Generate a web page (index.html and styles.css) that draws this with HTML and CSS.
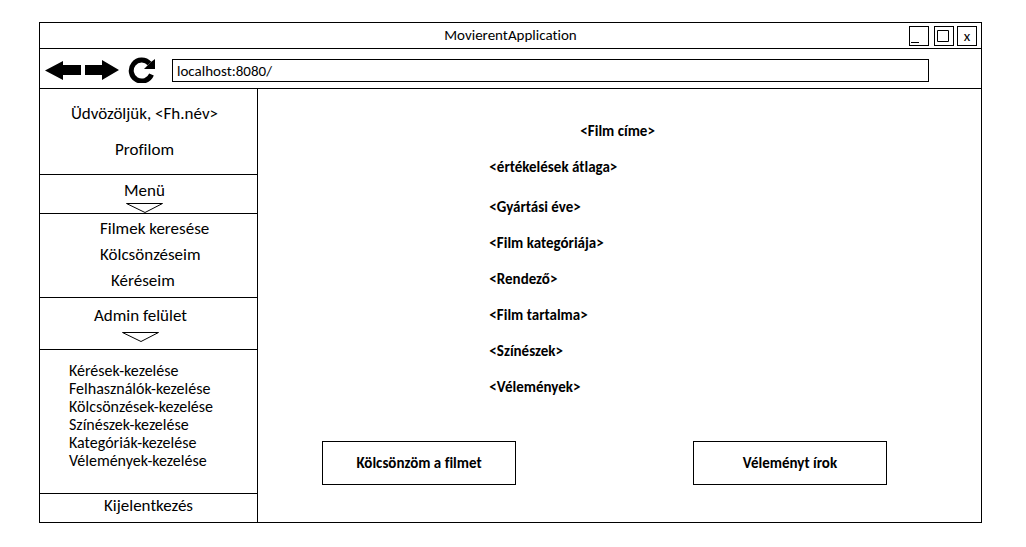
FILE: index.html
```html
<!DOCTYPE html>
<html lang="hu">
<head>
<meta charset="utf-8">
<meta name="viewport" content="width=device-width, initial-scale=1">
<title>MovierentApplication</title>
<link rel="stylesheet" href="styles.css">
</head>
<body>
<div class="window">
  <header class="titlebar">
    <h1 class="titlebar-text">MovierentApplication</h1>
    <div class="window-controls">
      <button class="control" type="button" aria-label="Kis méret"><svg width="18" height="18" viewBox="0 0 18 18"><path d="M1 15.500h8" stroke="#000" fill="none"/></svg></button>
      <button class="control control-max" type="button" aria-label="Teljes méret"><svg width="18" height="18" viewBox="0 0 18 18"><path d="M2.500 3.500h11v11h-11z" stroke="#000" fill="none"/></svg></button>
      <button class="control" type="button" aria-label="Bezárás">x</button>
    </div>
  </header>
  <div class="toolbar">
    <button class="icon-button" type="button" aria-label="Vissza"><svg width="36" height="20" viewBox="0 0 36 20"><path d="M0 10.500 18 1v4h18v10H18v5z"/></svg></button>
    <button class="icon-button" type="button" aria-label="Előre"><svg width="34" height="20" viewBox="0 0 34 20"><path d="M34 10 17 0v5H0v10h17v5z"/></svg></button>
    <button class="icon-button reload" type="button" aria-label="Frissítés"><svg width="28" height="26" viewBox="0 0 28 26"><path d="M24.500 17.500A10.500 10.500 0 1 1 22.500 6.500" fill="none" stroke="#000" stroke-width="5"/><path d="M28 2v10H17l4-4 3-3z"/></svg></button>
    <input class="address" type="text" aria-label="Cím" value="localhost:8080/">
  </div>
  <div class="content">
    <nav class="sidebar">
      <div class="panel greeting">
        <p class="line">Üdvözöljük, &lt;Fh.név&gt;</p>
        <a class="line" href="#">Profilom</a>
      </div>
      <button class="panel toggle" type="button">Menü<svg width="37" height="10" viewBox="0 0 37 10"><path d="M.5.5h36L19 9.500z" fill="none" stroke="#000"/></svg></button>
      <ul class="panel menu">
        <li><a href="#">Filmek keresése</a></li>
        <li><a href="#">Kölcsönzéseim</a></li>
        <li class="indented"><a href="#">Kéréseim</a></li>
      </ul>
      <button class="panel toggle toggle-admin" type="button">Admin felület<svg width="37" height="10" viewBox="0 0 37 10"><path d="M.5.5h36L19 9.500z" fill="none" stroke="#000"/></svg></button>
      <ul class="panel admin">
        <li><a href="#">Kérések-kezelése</a></li>
        <li><a href="#">Felhasználók-kezelése</a></li>
        <li><a href="#">Kölcsönzések-kezelése</a></li>
        <li><a href="#">Színészek-kezelése</a></li>
        <li><a href="#">Kategóriák-kezelése</a></li>
        <li><a href="#">Vélemények-kezelése</a></li>
      </ul>
      <a class="logout" href="#">Kijelentkezés</a>
    </nav>
    <main class="film">
      <div class="details">
        <h2 class="film-title">&lt;Film címe&gt;</h2>
        <p class="rating">&lt;értékelések átlaga&gt;</p>
        <p>&lt;Gyártási éve&gt;</p>
        <p>&lt;Film kategóriája&gt;</p>
        <p>&lt;Rendező&gt;</p>
        <p>&lt;Film tartalma&gt;</p>
        <p>&lt;Színészek&gt;</p>
        <p>&lt;Vélemények&gt;</p>
      </div>
      <div class="actions">
        <button class="action" type="button">Kölcsönzöm a filmet</button>
        <button class="action" type="button">Véleményt írok</button>
      </div>
    </main>
  </div>
</div>
</body>
</html>
```
FILE: styles.css
```css
* { box-sizing: border-box; }
body {
  margin: 22px 44px 24px 39px;
  background: #fff;
  color: #000;
  font: 17px/26px Carlito, Calibri, Lato, sans-serif;
  font-variant-ligatures: none;
}
h1, h2, p, ul { margin: 0; padding: 0; font-size: inherit; font-weight: inherit; }
ul { list-style: none; }
a { color: inherit; text-decoration: none; }
button, input {
  font-family: inherit;
  font-size: inherit;
  line-height: inherit;
  font-variant-ligatures: inherit;
  color: inherit;
  background: none;
  border: 0;
  padding: 0;
  margin: 0;
  border-radius: 0;
}
svg { display: block; }

.window { border: 1px solid #000; }
.titlebar {
  display: grid;
  grid-template-columns: 1fr auto 1fr;
  border-bottom: 1px solid #000;
  font-size: 15px;
  line-height: 24px;
}
.titlebar-text { grid-column: 2; }
.window-controls { display: flex; justify-content: flex-end; align-items: center; height: 25px; padding-right: 4px; }
.control { width: 20px; height: 20px; border: 1px solid #000; line-height: 18px; }
.control-max { margin: 0 3px 0 5px; }

.toolbar {
  display: flex;
  align-items: center;
  padding: 8px 52px 5px 5px;
  border-bottom: 1px solid #000;
}
.icon-button { margin-right: 4px; }
.reload { margin: 0 17px 0 4px; }
.address { flex: 1; min-width: 0; height: 23px; border: 1px solid #000; padding: 2px 4px 0; font-size: 15px; }

.content { display: flex; }
.sidebar { width: 218px; flex: none; border-right: 1px solid #000; display: flex; flex-direction: column; }
.panel { border-bottom: 1px solid #000; }
.greeting { display: flex; flex-direction: column; align-items: center; padding: 7px 8px 6px 0; }
.line { line-height: 36px; }
.toggle { display: flex; flex-direction: column; align-items: center; line-height: 24px; padding: 4px 8px 0 0; }
.toggle-admin { padding: 6px 16px 7px 0; gap: 4px; }
.menu { padding: 2px 0 3px 60px; }
.indented { padding-left: 11px; }
.admin { padding: 12px 0 23px 29px; font-size: 16px; line-height: 18px; }
.logout { line-height: 24px; padding-bottom: 4px; text-align: center; }

.film { flex: 1; min-width: 0; font-size: 15px; font-weight: bold; padding: 24px 0 36px; }
.details { padding-left: 32%; line-height: 36px; }
.film-title { padding-left: 91px; }
.rating { margin-bottom: 4px; }
.actions { display: flex; justify-content: space-between; padding: 0 94px 0 64px; margin-top: 36px; }
.action { width: 194px; height: 44px; border: 1px solid #000; font-weight: bold; }
```
